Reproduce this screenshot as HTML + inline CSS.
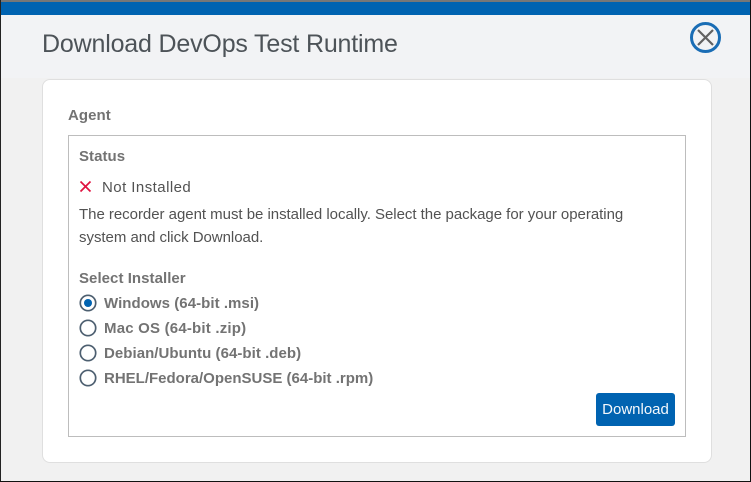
<!DOCTYPE html>
<html>
<head>
<meta charset="utf-8">
<style>
html,body{margin:0;padding:0;width:751px;height:482px;overflow:hidden;background:#f1f1f1;font-family:"Liberation Sans",sans-serif}
.a{position:absolute;white-space:nowrap}
.lab{font-size:15px;font-weight:bold;color:#737373;line-height:18px;letter-spacing:.05px}
.t{font-size:15px;color:#525252;line-height:18px}
.r{position:absolute;left:79px;width:18px;height:18px}
</style>
</head>
<body>
<div class="a" style="left:0;top:0;width:751px;height:2px;background:#777"></div>
<div class="a" style="left:0;top:2px;width:751px;height:13px;background:#0063b1"></div>
<div class="a" style="left:0;top:15px;width:751px;height:63px;background:#f2f3f5"></div>
<div class="a" style="left:0;top:0;width:1px;height:482px;background:#222"></div>
<div class="a" style="left:750px;top:0;width:1px;height:482px;background:#111"></div>
<div class="a" style="left:0;top:481px;width:751px;height:1px;background:#111"></div>

<div class="a" style="left:42px;top:29px;font-size:25px;line-height:30px;color:#4d5358;letter-spacing:-.18px">Download DevOps Test Runtime</div>

<svg class="a" style="left:688.500px;top:21px" width="33" height="33" viewBox="0 0 33 33">
<circle cx="16.500" cy="16.500" r="14" fill="none" stroke="#1a6db5" stroke-width="3"/>
<path d="M9 9L24 24M24 9L9 24" stroke="#616161" stroke-width="2.200" fill="none"/>
</svg>

<div class="a" style="left:42px;top:79px;width:668px;height:382px;background:#fff;border:1px solid #dfdfdf;border-radius:8px"></div>
<div class="a lab" style="left:68px;top:107px">Agent</div>
<div class="a" style="left:68px;top:135px;width:616px;height:300px;background:#fff;border:1px solid #bdbdbd"></div>

<div class="a lab" style="left:79px;top:148px">Status</div>
<svg class="a" style="left:79px;top:180px" width="13" height="13" viewBox="0 0 13 13">
<path d="M1.500 1.500L11.500 11.500M11.500 1.500L1.500 11.500" stroke="#e0123f" stroke-width="1.700" fill="none"/>
</svg>
<div class="a t" style="left:102px;top:179px;letter-spacing:.45px">Not Installed</div>
<div class="a t" style="left:79px;top:206px;letter-spacing:-.03px">The recorder agent must be installed locally. Select the package for your operating</div>
<div class="a t" style="left:79px;top:229px;letter-spacing:-.03px">system and click Download.</div>

<div class="a lab" style="left:79px;top:270px">Select Installer</div>

<svg class="r" style="top:294px" viewBox="0 0 18 18"><circle cx="9" cy="9" r="7.700" fill="none" stroke="#4d5f70" stroke-width="1.700"/><circle cx="9" cy="9" r="4" fill="#0063b1"/></svg>
<div class="a lab" style="left:104px;top:295px">Windows (64-bit .msi)</div>
<svg class="r" style="top:319px" viewBox="0 0 18 18"><circle cx="9" cy="9" r="7.700" fill="none" stroke="#4d5f70" stroke-width="1.700"/></svg>
<div class="a lab" style="left:104px;top:320px;letter-spacing:.2px">Mac OS (64-bit .zip)</div>
<svg class="r" style="top:344px" viewBox="0 0 18 18"><circle cx="9" cy="9" r="7.700" fill="none" stroke="#4d5f70" stroke-width="1.700"/></svg>
<div class="a lab" style="left:104px;top:345px">Debian/Ubuntu (64-bit .deb)</div>
<svg class="r" style="top:369px" viewBox="0 0 18 18"><circle cx="9" cy="9" r="7.700" fill="none" stroke="#4d5f70" stroke-width="1.700"/></svg>
<div class="a lab" style="left:104px;top:370px;letter-spacing:0">RHEL/Fedora/OpenSUSE (64-bit .rpm)</div>

<div class="a" style="left:596px;top:393px;width:79px;height:33px;background:#0063b1;border-radius:3px;color:#f4f8fc;font-size:15px;line-height:33px;text-align:center">Download</div>
</body>
</html>
